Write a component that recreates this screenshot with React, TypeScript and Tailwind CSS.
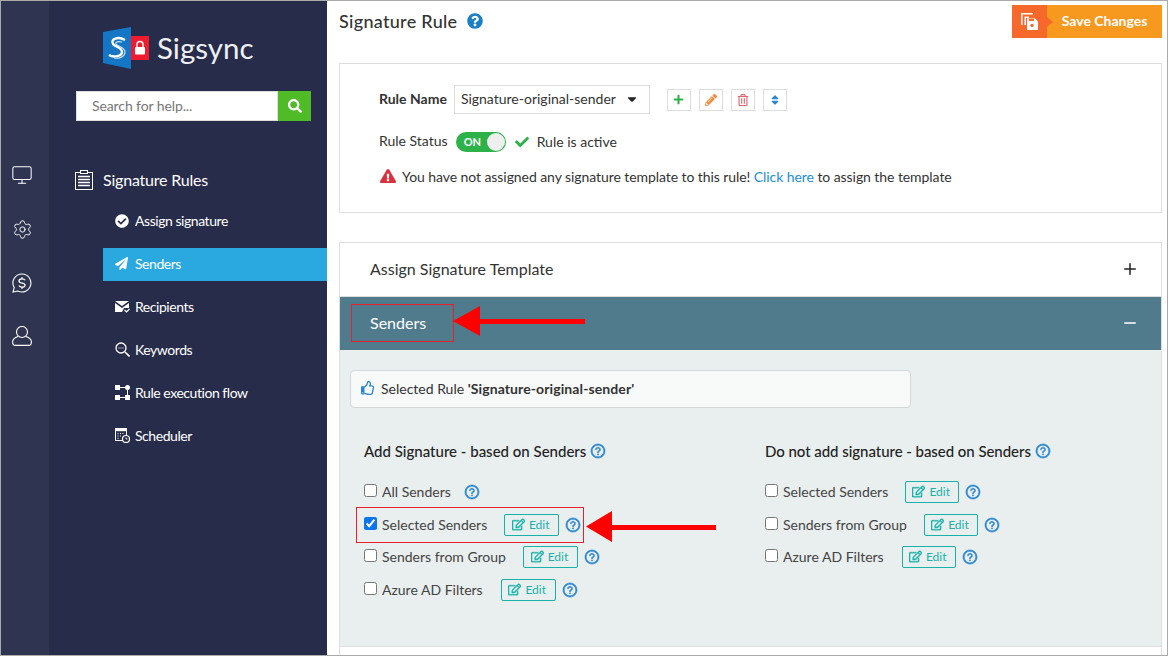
import { Monitor, Settings, Plus, Minus } from 'lucide-react'
import { FC, ReactNode } from 'react'
import {
  FaPlus,
  FaPencilAlt,
  FaRegTrashAlt,
  FaSort,
  FaCheck,
  FaExclamationTriangle,
  FaRegThumbsUp,
  FaRegEdit,
  FaSearch,
  FaCheckCircle,
  FaPaperPlane,
  FaCaretDown,
  FaQuestionCircle,
} from 'react-icons/fa'
import { AiOutlineQuestionCircle } from 'react-icons/ai'

const Logo = () => (
  <div className="flex items-center h-[42px]">
    <svg width="48" height="42" viewBox="0 0 48 42" className="shrink-0">
      <polygon points="1,5 29,0 29,42 1,36" fill="#1476c4" />
      <path d="M23 13 C16 9 8 12 11 17 C13 20 20 20 20 25 C20 29 12 31 7 28" fill="none" stroke="#fff" strokeWidth="2.4" />
      <path d="M20 15 C16 14 13 15 14 17 C16 20 24 20 23 26 C22 30 17 32 12 31" fill="none" stroke="#cfe3f5" strokeWidth="1.2" />
      <rect x="29" y="9" width="18" height="24" fill="#ee1c2e" />
      <rect x="33" y="20" width="10" height="7.500" rx="1" fill="#fff" />
      <path d="M35 20 v-2.500 a3 3 0 0 1 6 0 v2.500" fill="none" stroke="#fff" strokeWidth="1.4" />
    </svg>
    <span className="ml-[7px] text-[29.5px] leading-none text-[#eef0f5]">Sigsync</span>
  </div>
)

const ClipboardIcon = () => (
  <svg width="18" height="20" viewBox="0 0 18 20" fill="none" stroke="#fff">
    <rect x="0.5" y="2.5" width="17" height="17" />
    <rect x="5.5" y="0.5" width="7" height="3" fill="#272c4a" />
    <path d="M3 6.5h12M3 9.5h12M3 12.5h12M3 15.5h12" strokeWidth="1.6" />
  </svg>
)

const MailIcon = () => (
  <svg width="15" height="13" viewBox="0 0 15 13">
    <path d="M0 1h14L7 6z M0 3l7 5 7-5v5H9l-2 4H0z" fill="#fff" />
    <path d="M9.5 10l2 2 3-3" fill="none" stroke="#fff" strokeWidth="1.2" />
  </svg>
)

const KeywordIcon = () => (
  <svg width="15" height="15" viewBox="0 0 15 15" fill="none" stroke="#fff">
    <circle cx="6" cy="6" r="5" strokeWidth="1.3" />
    <path d="M10 10l4.5 4.5" strokeWidth="1.6" />
    <path d="M3.5 6h1M5.5 6h1M7.5 6h1" strokeWidth="1.1" />
  </svg>
)

const FlowIcon = () => (
  <svg width="15" height="15" viewBox="0 0 15 15" fill="#fff">
    <rect x="0" y="0" width="5" height="5" />
    <rect x="0" y="10" width="5" height="5" />
    <rect x="10" y="10" width="5" height="5" />
    <circle cx="12.5" cy="2.5" r="2.5" />
    <path d="M5 2h5v1H5zM12 5h1v5h-1zM5 12h5v1H5z" />
  </svg>
)

const SchedulerIcon = () => (
  <svg width="15" height="15" viewBox="0 0 15 15" fill="none" stroke="#fff">
    <rect x="0.5" y="0.5" width="11" height="12" />
    <path d="M0 2h12" strokeWidth="2.4" />
    <path d="M2.5 5.5h1M5 5.5h1M7.5 5.5h1M2.5 8h1M5 8h1M2.5 10.5h1" />
    <circle cx="11" cy="11" r="3.5" fill="#272c4a" strokeWidth="1.2" />
    <path d="M11 9.5V11h1.4" strokeWidth="0.9" />
  </svg>
)

const ChatDollarIcon = () => (
  <svg width="20" height="20" viewBox="0 0 20 20" fill="none" stroke="#fff" strokeWidth="1.1">
    <path d="M10 1a9 9 0 1 1-4.2 17L1 19l1.2-4.4A9 9 0 0 1 10 1z" />
    <path d="M13 7.2C12.4 6 11 5.8 10 5.8c-1.6 0-3 .8-3 2.2 0 3 6 1.4 6 4 0 1.4-1.400 2.200-3 2.200-1.200 0-2.500-.4-3-1.600" strokeWidth="1.3" />
    <path d="M10 4v2M10 14v2" />
  </svg>
)

const PersonIcon = () => (
  <svg width="20" height="20" viewBox="0 0 20 20" fill="none" stroke="#fff" strokeWidth="1.1">
    <circle cx="10" cy="6" r="5.500" />
    <path d="M6 10.500C3 11.500 .6 13 .6 16c0 2 1 3.400 3 3.400h12.800c2 0 3-1.400 3-3.400 0-3-2.400-4.500-5.400-5.500" />
  </svg>
)

const SaveIcon = () => (
  <svg width="18" height="18" viewBox="0 0 18 18">
    <path d="M0.8 12V0.8H12" fill="none" stroke="#fff" strokeWidth="1.4" />
    <path d="M3.5 3.500H8v1.500H5V12H3.500z" fill="#fff" />
    <path d="M6 5.500h8l3 3V17H6z" fill="#fff" />
    <circle cx="11" cy="12.500" r="1.700" fill="#f6692a" />
    <rect x="8" y="6" width="5" height="2" fill="#f6692a" />
  </svg>
)

const Help = () => <AiOutlineQuestionCircle className="shrink-0 stroke-[40] text-[16px] text-[#2a86d0]" />

type NavItemProps = { icon: ReactNode; label: string; active?: boolean }

const NavItem: FC<NavItemProps> = ({ icon, label, active }) => (
  <div className={`ml-[54px] flex h-[33px] items-center pb-[2px] pl-[12px] text-[14px] tracking-[-0.45px] text-white ${active ? 'bg-[#2aa9e0]' : ''}`}>
    <span className="flex w-[20px] shrink-0 items-center">{icon}</span>
    {label}
  </div>
)

const ToolButton: FC<{ children: ReactNode; className?: string }> = ({ children, className }) => (
  <div className={`flex h-[22px] w-[24px] items-center justify-center border border-[#ddd] bg-white text-[13px] ${className}`}>
    {children}
  </div>
)

type OptionProps = { label: string; checked?: boolean; gap?: string; width?: string; edit?: boolean }

const Option: FC<OptionProps> = ({ label, checked, gap = 'ml-[17px]', width = 'w-[55px]', edit = true }) => (
  <div className="flex h-[33px] items-center">
    <input type="checkbox" defaultChecked={checked} className="mb-[3px] mr-[5px] h-[13px] w-[13px] shrink-0 accent-[#0b76ef]" />
    <span className="text-[14px] text-[#444]">{label}</span>
    {edit ? (
      <>
        <div className={`${gap} ${width} flex h-[22px] items-center justify-center gap-[4px] rounded-[2px] border border-[#17b3aa] pr-[2px] text-[12px] text-[#17b3aa]`}>
          <FaRegEdit className="stroke-[15] text-[13px]" />
          Edit
        </div>
        <span className="ml-[6px]">
          <Help />
        </span>
      </>
    ) : (
      <span className="ml-[13px]">
        <Help />
      </span>
    )}
  </div>
)

export default function App() {
  return (
    <div className="relative flex h-[656px] w-[1168px] overflow-hidden border border-[#aaa] bg-white font-['Lato',sans-serif] text-[#222]">
      <aside className="flex w-[48px] shrink-0 flex-col items-center gap-[33px] bg-[#2f3450] pr-[6px] pt-[163px] text-white">
        <Monitor size={22} strokeWidth={1.1} />
        <Settings size={21} strokeWidth={1.1} />
        <ChatDollarIcon />
        <PersonIcon />
      </aside>

      <nav className="w-[278px] shrink-0 bg-[#272c4a]">
        <div className="ml-[53px] mt-[26px]">
          <Logo />
        </div>
        <div className="ml-[27px] mt-[22px] flex h-[30px] w-[235px]">
          <div className="flex flex-1 items-center border border-[#ddd] bg-white pb-[2px] pl-[15px] text-[14px] tracking-[-0.1px] text-[#777]">Search for help...</div>
          <div className="flex w-[33px] items-center justify-center bg-[#4fbb26] text-[14px] text-white">
            <FaSearch />
          </div>
        </div>
        <div className="ml-[26px] mt-[49px] flex h-[20px] items-center gap-[10px] text-[16px] tracking-[-0.2px] text-white">
          <ClipboardIcon />
          Signature Rules
        </div>
        <div className="mt-[15px] flex flex-col gap-[10px]">
          <NavItem icon={<FaCheckCircle className="text-[14px]" />} label="Assign signature" />
          <NavItem active icon={<FaPaperPlane className="text-[13px]" />} label="Senders" />
          <NavItem icon={<MailIcon />} label="Recipients" />
          <NavItem icon={<KeywordIcon />} label="Keywords" />
          <NavItem icon={<FlowIcon />} label="Rule execution flow" />
          <NavItem icon={<SchedulerIcon />} label="Scheduler" />
        </div>
      </nav>

      <main className="flex-1 pl-[12px] pr-[5px] pt-[4px]">
        <div className="flex items-start justify-between">
          <div className="flex items-center gap-[10px] pt-[4px] text-[18px] font-medium leading-[24px] tracking-[0.3px] text-[#333]">
            Signature Rule
            <FaQuestionCircle className="text-[16px] text-[#1b7fc4]" />
          </div>
          <div className="flex h-[33px] w-[150px] text-[14px] font-bold text-white">
            <div className="relative flex w-[35px] items-center justify-center bg-[#f6692a]">
              <SaveIcon />
              <div className="absolute left-full top-[12px] border-y-[5px] border-l-[6px] border-y-transparent border-l-[#f6692a]" />
            </div>
            <div className="flex flex-1 items-center justify-center bg-[#f7981f] pb-[2px]">Save Changes</div>
          </div>
        </div>

        <section className="mt-[25px] h-[150px] border border-[#ddd] pl-[39px] pt-[21px] text-[14px]">
          <div className="flex h-[29px] items-center">
            <span className="mb-[3px] mr-[7px] font-bold text-[#333]">Rule Name</span>
            <div className="flex h-[29px] w-[196px] items-center justify-between border border-[#ddd] pb-[2px] pl-[6px] pr-[10px] text-[#333]">
              Signature-original-sender
              <FaCaretDown className="text-[14px] text-[#222]" />
            </div>
            <div className="ml-[17px] flex gap-[8px]">
              <ToolButton className="text-[#2db24a]">
                <FaPlus className="text-[11px]" />
              </ToolButton>
              <ToolButton className="text-[#f58b3c]">
                <FaPencilAlt className="text-[12px]" />
              </ToolButton>
              <ToolButton className="text-[#e0676f]">
                <FaRegTrashAlt className="text-[12px]" />
              </ToolButton>
              <ToolButton className="text-[#2a86d0]">
                <FaSort className="text-[12px]" />
              </ToolButton>
            </div>
          </div>
          <div className="mt-[17px] flex h-[22px] items-center">
            <span className="mb-[4px] mr-[8px] text-[#333]">Rule Status</span>
            <div className="flex h-[20px] w-[50px] items-center justify-between rounded-full bg-[#2db24a] pl-[8px] pr-[1px] text-[11px] font-bold text-white">
              ON
              <span className="h-[18px] w-[18px] rounded-full bg-[#eee]" />
            </div>
            <FaCheck className="ml-[9px] text-[14px] text-[#2db24a]" />
            <span className="mb-[2px] ml-[8px] text-[#333]">Rule is active</span>
          </div>
          <div className="mt-[12px] flex h-[22px] items-center tracking-[-0.07px] text-[#333]">
            <FaExclamationTriangle className="ml-px text-[16px] text-[#d9323c]" />
            <span className="ml-[6px]">
              You have not assigned any signature template to this rule! <span className="text-[#1b8fd6]">Click here</span> to assign the template
            </span>
          </div>
        </section>

        <section className="mt-[29px] border border-[#ddd]">
          <div className="flex h-[54px] items-center justify-between border-b border-[#ddd] pb-[2px] pl-[30px] pr-[22px] text-[16px] text-[#333]">
            Assign Signature Template
            <Plus size={18} strokeWidth={2} className="text-[#222]" />
          </div>
          <div className="flex h-[53px] items-center justify-between bg-[#507b8c] pb-[2px] pl-[30px] pr-[22px] text-[16px] text-white">
            Senders
            <Minus size={18} strokeWidth={2} />
          </div>
          <div className="h-[296px] bg-[#e9eeee] pl-[10px] pt-[20px]">
            <div className="flex h-[38px] w-[561px] items-center gap-[6px] rounded-[4px] border border-[#d5d8d8] bg-[#f8f9f9] pb-[2px] pl-[10px] text-[14px] text-[#333]">
              <FaRegThumbsUp className="text-[14px] text-[#2a86d0]" />
              <span>
                Selected Rule <b className="tracking-[0.1px]">'Signature-original-sender'</b>
              </span>
            </div>
            <div className="mt-[29px] flex">
              <div className="ml-[14px] w-[401px]">
                <div className="mb-[10px] flex h-[28px] items-center gap-[4px] text-[15px] font-medium text-[#222]">
                  Add Signature - based on Senders
                  <Help />
                </div>
                <Option label="All Senders" edit={false} />
                <Option label="Selected Senders" checked />
                <div className="-mt-px">
                  <Option label="Senders from Group" />
                  <Option label="Azure AD Filters" gap="ml-[18px]" />
                </div>
              </div>
              <div>
                <div className="mb-[10px] flex h-[28px] items-center gap-[4px] text-[15px] font-medium tracking-[-0.05px] text-[#222]">
                  Do not add signature - based on Senders
                  <Help />
                </div>
                <Option label="Selected Senders" width="w-[54px]" />
                <Option label="Senders from Group" width="w-[54px]" />
                <div className="-mt-px">
                  <Option label="Azure AD Filters" gap="ml-[18px]" width="w-[54px]" />
                </div>
              </div>
            </div>
          </div>
          <div className="h-[10px] border-t border-[#ddd]" />
        </section>
      </main>

      {/* annotations on top of the screenshot */}
      <div className="absolute left-[350px] top-[303px] h-[38px] w-[103px] border border-[#e8202a]" />
      <div className="absolute left-[355px] top-[506px] h-[36px] w-[228px] border border-[#e8202a]" />
      <svg className="absolute left-[452px] top-[305px]" width="132" height="31" viewBox="0 0 132 31">
        <polygon points="0,15 27,0 27,13 132,13 132,18 27,18 27,30" fill="#fe0000" />
      </svg>
      <svg className="absolute left-[585px] top-[510px]" width="131" height="32" viewBox="0 0 131 32">
        <polygon points="0,15.500 26,0 26,14 130,14 130,19 26,19 26,31" fill="#fe0000" />
      </svg>
    </div>
  )
}
